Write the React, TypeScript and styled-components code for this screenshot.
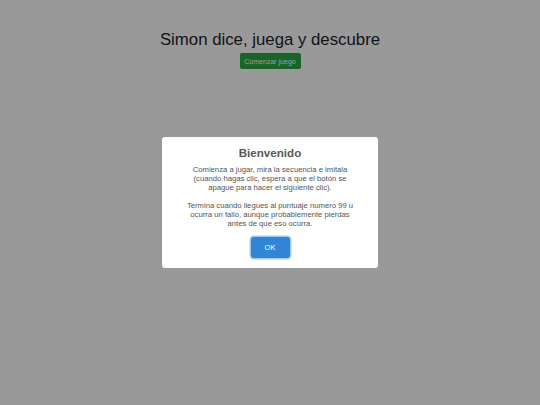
import React from 'react';
import styled, { createGlobalStyle } from 'styled-components';

const GlobalStyle = createGlobalStyle`
  html, body {
    margin: 0;
    padding: 0;
    background: #ffffff;
    font-family: "Liberation Sans", Arial, sans-serif;
  }
`;

const Page = styled.div`
  display: flex;
  flex-direction: column;
  align-items: center;
  padding-top: 30px;
  height: 405px;
  box-sizing: border-box;
`;

const Heading = styled.h1`
  margin: 0;
  font-size: 16.8px;
  font-weight: 400;
  color: #212529;
  line-height: 20px;
`;

const StartButton = styled.button`
  margin-top: 3px;
  width: 61px;
  height: 16px;
  padding: 0;
  border: none;
  border-radius: 2px;
  background: #28a745;
  color: #ffffff;
  font-family: inherit;
  font-size: 7px;
`;

const Overlay = styled.div`
  position: fixed;
  inset: 0;
  background: rgba(0, 0, 0, 0.4);
  display: flex;
  align-items: center;
  justify-content: center;
`;

const Modal = styled.div`
  width: 216px;
  height: 131px;
  box-sizing: border-box;
  background: #ffffff;
  border-radius: 3px;
  display: flex;
  flex-direction: column;
  align-items: center;
  padding-top: 9px;
`;

const Title = styled.h2`
  margin: 0;
  font-size: 11.6px;
  font-weight: 700;
  color: #595959;
  line-height: 14px;
`;

const Body = styled.div`
  margin-top: 5px;
  width: 172px;
  text-align: center;
  font-size: 7.7px;
  line-height: 9px;
  color: #545454;
`;

const Para = styled.p<{ $gap?: number }>`
  margin: 0;
  margin-top: ${p => p.$gap ?? 0}px;
`;

const OkButton = styled.button`
  margin-top: 9px;
  width: 39px;
  height: 21px;
  padding: 0;
  border: none;
  border-radius: 3px;
  background: #3085d6;
  color: #ffffff;
  font-family: inherit;
  font-size: 7.5px;
  box-shadow: 0 0 0 1.5px #a5c9ec;
`;

const App = () => {
  return (
    <>
      <GlobalStyle />
      <Page>
        <Heading>Simon dice, juega y descubre</Heading>
        <StartButton>Comenzar juego</StartButton>
      </Page>
      <Overlay>
        <Modal>
          <Title>Bienvenido</Title>
          <Body>
            <Para>
              Comienza a jugar, mira la secuencia e imitala (cuando hagas clic,
              espera a que el botón se apague para hacer el siguiente clic).
            </Para>
            <Para $gap={9}>
              Termina cuando llegues al puntuaje numero 99 u ocurra un fallo,
              aunque probablemente pierdas antes de que eso ocurra.
            </Para>
          </Body>
          <OkButton>OK</OkButton>
        </Modal>
      </Overlay>
    </>
  );
};

export default App;
